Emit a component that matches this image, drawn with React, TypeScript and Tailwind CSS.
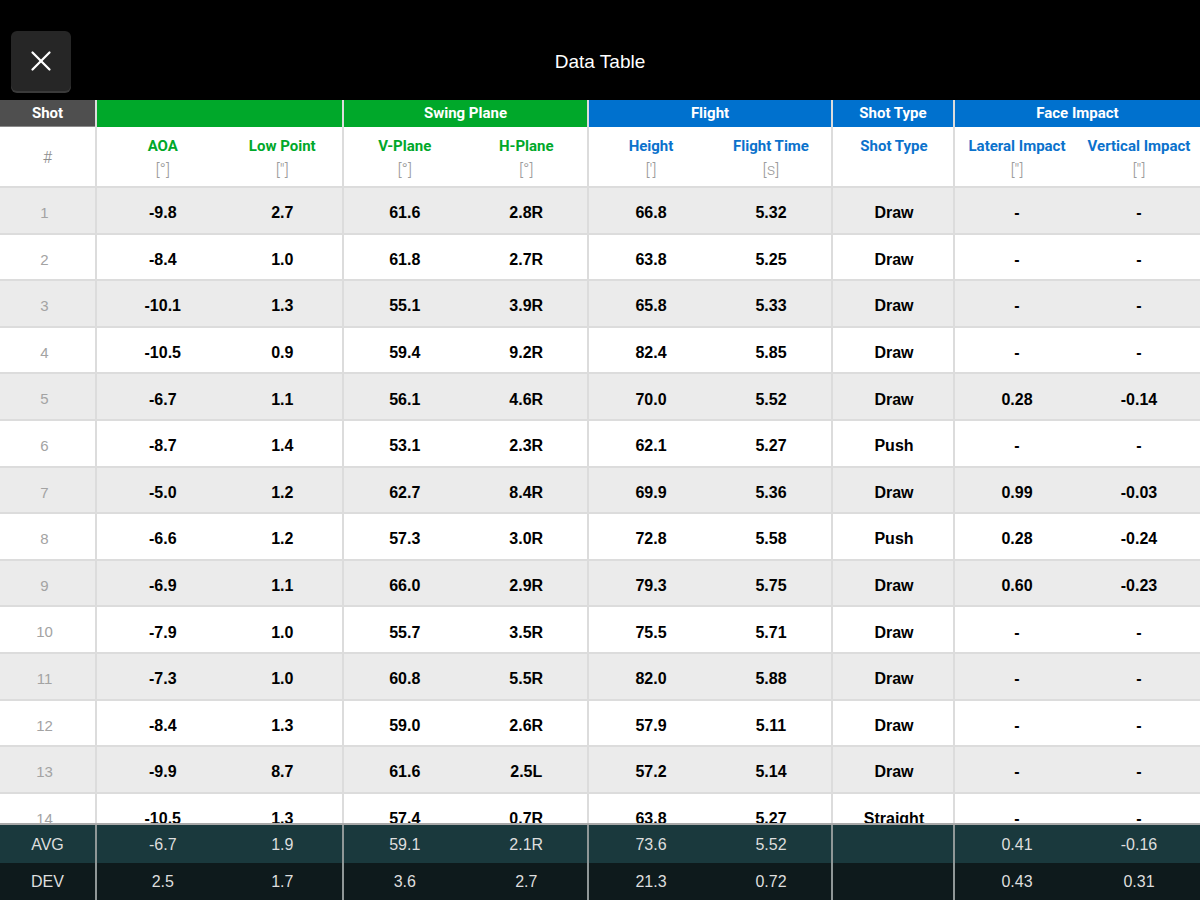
import { X } from "lucide-react"

type Col = { title: string; unit?: string }
type Group = { label: string; width: string; head: string; text: string; pad: string; cols: Col[] }

const groups: Group[] = [
  { label: "", width: "w-[247px]", head: "bg-[#00a82a]", text: "text-[#00a82a]", pad: "pl-[6px]", cols: [{ title: "AOA", unit: "[°]" }, { title: "Low Point", unit: "['']" }] },
  { label: "Swing Plane", width: "w-[245px]", head: "bg-[#00a82a]", text: "text-[#00a82a]", pad: "", cols: [{ title: "V-Plane", unit: "[°]" }, { title: "H-Plane", unit: "[°]" }] },
  { label: "Flight", width: "w-[244px]", head: "bg-[#0071ce]", text: "text-[#0b72cc]", pad: "pl-[2px]", cols: [{ title: "Height", unit: "[']" }, { title: "Flight Time", unit: "[s]" }] },
  { label: "Shot Type", width: "w-[122px]", head: "bg-[#0071ce]", text: "text-[#0b72cc]", pad: "pl-[2px]", cols: [{ title: "Shot Type" }] },
  { label: "Face Impact", width: "w-[247px]", head: "bg-[#0071ce]", text: "text-[#0b72cc]", pad: "pl-[1px]", cols: [{ title: "Lateral Impact", unit: "['']" }, { title: "Vertical Impact", unit: "['']" }] },
]

const rows: string[][] = [
  ["-9.8", "2.7", "61.6", "2.8R", "66.8", "5.32", "Draw", "-", "-"],
  ["-8.4", "1.0", "61.8", "2.7R", "63.8", "5.25", "Draw", "-", "-"],
  ["-10.1", "1.3", "55.1", "3.9R", "65.8", "5.33", "Draw", "-", "-"],
  ["-10.5", "0.9", "59.4", "9.2R", "82.4", "5.85", "Draw", "-", "-"],
  ["-6.7", "1.1", "56.1", "4.6R", "70.0", "5.52", "Draw", "0.28", "-0.14"],
  ["-8.7", "1.4", "53.1", "2.3R", "62.1", "5.27", "Push", "-", "-"],
  ["-5.0", "1.2", "62.7", "8.4R", "69.9", "5.36", "Draw", "0.99", "-0.03"],
  ["-6.6", "1.2", "57.3", "3.0R", "72.8", "5.58", "Push", "0.28", "-0.24"],
  ["-6.9", "1.1", "66.0", "2.9R", "79.3", "5.75", "Draw", "0.60", "-0.23"],
  ["-7.9", "1.0", "55.7", "3.5R", "75.5", "5.71", "Draw", "-", "-"],
  ["-7.3", "1.0", "60.8", "5.5R", "82.0", "5.88", "Draw", "-", "-"],
  ["-8.4", "1.3", "59.0", "2.6R", "57.9", "5.11", "Draw", "-", "-"],
  ["-9.9", "8.7", "61.6", "2.5L", "57.2", "5.14", "Draw", "-", "-"],
  ["-10.5", "1.3", "57.4", "0.7R", "63.8", "5.27", "Straight", "-", "-"],
  ["-7.1", "1.5", "58.2", "1.9R", "70.4", "5.48", "Draw", "-", "-"],
]

const avg = ["-6.7", "1.9", "59.1", "2.1R", "73.6", "5.52", "", "0.41", "-0.16"]
const dev = ["2.5", "1.7", "3.6", "2.7", "21.3", "0.72", "", "0.43", "0.31"]

// split a flat row of 9 values into the group layout
function split(values: string[]) {
  const out: string[][] = []
  let i = 0
  for (const g of groups) {
    out.push(values.slice(i, i + g.cols.length))
    i += g.cols.length
  }
  return out
}

function DataRow({ index, values }: { index: number; values: string[] }) {
  const odd = index % 2 === 1
  return (
    <div className={`flex h-[46.6px] shrink-0 border-b-2 border-[#dcdcdc] ${odd ? "bg-[#ebebeb]" : "bg-white"}`}>
      <div className="flex w-[95px] items-center justify-center pt-[6px] pr-[6px] text-[15px] text-[#a3a3a3]">{index}</div>
      {split(values).map((cells, gi) => (
        <div key={gi} className={`flex ${groups[gi].width} ${groups[gi].pad} border-l-2 border-[#dcdcdc]`}>
          {cells.map((v, ci) => (
            <div key={ci} className="flex flex-1 items-center justify-center pt-[6px] text-[16px] font-bold text-black">
              {v}
            </div>
          ))}
        </div>
      ))}
    </div>
  )
}

function FooterRow({ label, values, bg }: { label: string; values: string[]; bg: string }) {
  return (
    <div className={`flex h-[37.5px] ${bg}`}>
      <div className="flex w-[95px] items-center justify-center pt-[2px] text-[16px] text-[#dedede]">{label}</div>
      {split(values).map((cells, gi) => (
        <div key={gi} className={`flex ${groups[gi].width} ${groups[gi].pad} border-l-2 border-[#8f9797]`}>
          {cells.map((v, ci) => (
            <div key={ci} className="flex flex-1 items-center justify-center pt-[2px] text-[16px] text-[#dedede]">
              {v}
            </div>
          ))}
        </div>
      ))}
    </div>
  )
}

export default function App() {
  return (
    <div className="flex h-[900px] w-[1200px] flex-col overflow-hidden bg-white font-['Liberation_Sans',Arial,sans-serif]">
      {/* top bar */}
      <div className="relative flex h-[100px] shrink-0 items-center justify-center bg-black">
        <button className="absolute left-[11px] top-[31px] flex h-[60px] w-[60px] items-center justify-center rounded-[6px] bg-[#262626] shadow-[0_2px_0_#3a3a3a]">
          <X className="h-[34px] w-[34px] text-white" strokeWidth={1.6} />
        </button>
        <span className="pt-[24px] text-[19px] text-white">Data Table</span>
      </div>

      {/* group header */}
      <div className="flex h-[27px] shrink-0 font-['Roboto',sans-serif] text-[15px] font-bold text-white">
        <div className="flex w-[95px] items-center justify-center border-b border-[#8a8a8a] bg-[#4f4f4f]">Shot</div>
        {groups.map((g, gi) => (
          <div key={gi} className={`flex ${g.width} items-center justify-center border-l-2 border-[#dcdcdc] ${g.head}`}>
            {g.label}
          </div>
        ))}
      </div>

      {/* column header */}
      <div className="flex h-[61px] shrink-0 border-b-2 border-[#dcdcdc] bg-white font-['Roboto',sans-serif]">
        <div className="flex w-[95px] items-center justify-center pt-[2px] text-[16px] font-light text-[#8e8e8e]">#</div>
        {groups.map((g, gi) => (
          <div key={gi} className={`flex ${g.width} ${g.pad} border-l-2 border-[#dcdcdc]`}>
            {g.cols.map((c) => (
              <div key={c.title} className="flex flex-1 flex-col items-center pt-[9px]">
                <span className={`text-[15px] font-bold leading-[20px] whitespace-nowrap ${g.text}`}>{c.title}</span>
                {c.unit && <span className="mt-[2px] text-[17px] font-light leading-[22px] text-[#9c9c9c]">{c.unit}</span>}
              </div>
            ))}
          </div>
        ))}
      </div>

      {/* body */}
      <div className="flex flex-1 flex-col overflow-hidden">
        {rows.map((r, i) => (
          <DataRow key={i} index={i + 1} values={r} />
        ))}
      </div>

      {/* footer */}
      <div className="flex h-[77px] shrink-0 flex-col border-t-2 border-[#a9a9a9]">
        <FooterRow label="AVG" values={avg} bg="bg-[#1a393d]" />
        <FooterRow label="DEV" values={dev} bg="bg-[#0e1a1c]" />
      </div>
    </div>
  )
}
